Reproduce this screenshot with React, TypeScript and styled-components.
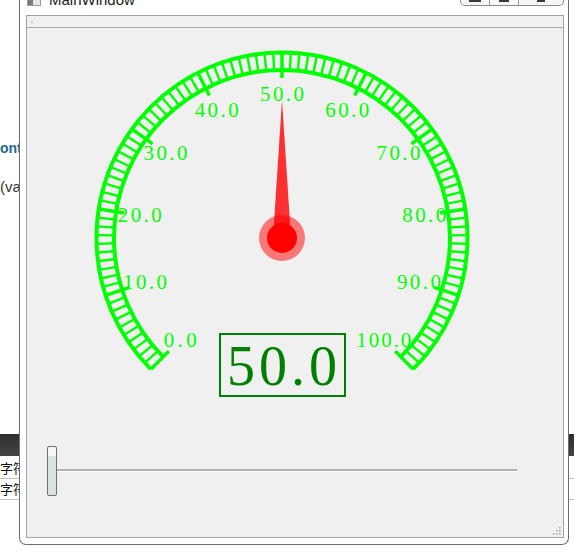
import React from 'react';
import styled, { createGlobalStyle } from 'styled-components';

const GlobalStyle = createGlobalStyle`
  html, body {
    margin: 0;
    padding: 0;
    background: #ffffff;
    overflow: hidden;
  }
`;

const Page = styled.div`
  display: grid;
  grid-template-columns: 19px 550px 5px;
  width: 574px;
  height: 559px;
  overflow: hidden;
  background: #ffffff;
  font-family: 'Liberation Sans', Arial, sans-serif;
`;

const Backdrop = styled.div`
  display: flex;
  flex-direction: column;
  overflow: hidden;
  white-space: nowrap;
`;

const LinkText = styled.div<{ top: number }>`
  margin-top: ${(p) => p.top}px;
  font-size: 14px;
  line-height: 16px;
  font-weight: bold;
  color: #1d6c8c;
`;

const CodeText = styled.div<{ top: number }>`
  margin-top: ${(p) => p.top}px;
  font-size: 15px;
  line-height: 16px;
  color: #333333;
  font-family: 'Liberation Sans', 'Noto Sans CJK SC', sans-serif;
`;

const DarkBar = styled.div<{ top: number }>`
  margin-top: ${(p) => p.top}px;
  height: 22px;
  background: linear-gradient(#2e2e2e, #444444);
`;

const TableRow = styled.div`
  height: 20px;
  border-bottom: 1px solid #c4c4c4;
  font-family: 'Noto Sans CJK SC', sans-serif;
  font-size: 13px;
  line-height: 20px;
  color: #111111;
`;

const Window = styled.div`
  display: flex;
  flex-direction: column;
  height: 545px;
  box-sizing: border-box;
  padding: 0 4px 6px 6px;
  border: 1px solid #6c6c6c;
  border-top: none;
  border-radius: 0 0 7px 7px;
  background: #ffffff;
`;

const TitleBar = styled.div`
  display: flex;
  height: 15px;
  flex: none;
  overflow: hidden;
`;

const AppIcon = styled.div`
  width: 14px;
  height: 14px;
  margin: -8px 0 0 1px;
  box-sizing: border-box;
  border: 1px solid #9a9a9a;
  background: linear-gradient(90deg, #7a7a7a 0 45%, #e8e8e8 45% 100%);
`;

const TitleText = styled.div`
  margin: -8px 0 0 8px;
  font-family: 'Liberation Sans', Arial, sans-serif;
  font-size: 15px;
  line-height: 15px;
  color: #1a1a1a;
`;

const CaptionButtons = styled.div`
  display: flex;
  margin-left: auto;
  height: 6px;
  box-sizing: border-box;
  border: 1px solid #8a8a8a;
  border-top: none;
  border-radius: 0 0 5px 5px;
  background: #f6f6f6;
  overflow: hidden;
`;

const CaptionButton = styled.div<{ w: number; last?: boolean }>`
  display: flex;
  justify-content: center;
  width: ${(p) => p.w}px;
  border-right: ${(p) => (p.last ? 'none' : '1px solid #9a9a9a')};
`;

const CaptionGlyph = styled.div<{ w: number }>`
  width: ${(p) => p.w}px;
  height: 2px;
  background: #3a3a3a;
`;

const Client = styled.div`
  display: flex;
  flex-direction: column;
  flex: 1;
  border: 1px solid #a3a3a3;
  background: #f0f0f0;
`;

const MenuStrip = styled.div`
  display: flex;
  align-items: center;
  height: 11px;
  flex: none;
  padding-left: 4px;
  border-bottom: 1px solid #a8a8a8;
  background: #f0f0f0;
`;

const Grip = styled.div`
  width: 2px;
  height: 2px;
  background: #c8c8c8;
`;

const Body = styled.div`
  display: flex;
  flex-direction: column;
  flex: 1;
`;

const SliderRow = styled.div`
  display: flex;
  align-items: center;
  height: 50px;
  margin-top: 38px;
  padding-left: 20px;
`;

const SliderHandle = styled.div`
  width: 10px;
  height: 50px;
  box-sizing: border-box;
  border: 1px solid #6f6f6f;
  border-radius: 2px;
  background: linear-gradient(#f6f6f6 0 18%, #dbe4da 18% 100%);
`;

const SliderGroove = styled.div`
  width: 460px;
  height: 2px;
  margin-top: -1px;
  background: #b2b2b2;
  border-bottom: 1px solid #ffffff;
`;

const SizeGrip = styled.svg`
  align-self: flex-end;
  margin: auto 2px 2px 0;
`;

const CX = 255;
const CY = 210;
const R_OUT = 185.5;
const R_IN = 168;
const R_MAJOR = 160;
const R_LABEL = 144;
const GREEN = '#00ff00';

const angleOf = (v: number) => 225 - v * 2.7;

const pt = (r: number, deg: number) => {
  const a = (deg * Math.PI) / 180;
  return [CX + r * Math.cos(a), CY - r * Math.sin(a)];
};

const arcPath = (r: number) => {
  const [x1, y1] = pt(r, 225);
  const [x2, y2] = pt(r, -45);
  return `M ${x1} ${y1} A ${r} ${r} 0 1 1 ${x2} ${y2}`;
};

interface GaugeProps {
  value: number;
}

const Gauge: React.FC<GaugeProps> = ({ value }) => {
  const ticks = [];
  for (let i = 0; i <= 100; i++) {
    const major = i % 10 === 0;
    const [x1, y1] = pt(R_OUT, angleOf(i));
    const [x2, y2] = pt(major ? R_MAJOR : R_IN, angleOf(i));
    ticks.push(
      <line key={i} x1={x1} y1={y1} x2={x2} y2={y2} stroke={GREEN} strokeWidth={major ? 3.5 : 2.4} />
    );
  }

  const labels = [];
  for (let i = 0; i <= 10; i++) {
    const text = `${i * 10}.0`;
    const [x, y] = pt(R_LABEL, angleOf(i * 10));
    labels.push(
      <text
        key={i}
        x={x}
        y={y + 7}
        textAnchor="middle"
        textLength={text.length * 11}
        lengthAdjust="spacing"
        fill={GREEN}
        fontFamily="'Liberation Serif', serif"
        fontSize={21}
      >
        {text}
      </text>
    );
  }

  const a = angleOf(value);
  const [tx, ty] = pt(138, a);
  const [lx, ly] = pt(9, a + 90);
  const [rx, ry] = pt(9, a - 90);

  return (
    <svg width={536} height={380} viewBox="0 0 536 380">
      <path d={arcPath(R_OUT)} fill="none" stroke={GREEN} strokeWidth={4} />
      <path d={arcPath(R_IN)} fill="none" stroke={GREEN} strokeWidth={4} />
      {ticks}
      {labels}
      <circle cx={CX} cy={CY} r={23} fill="rgba(255,0,0,0.5)" />
      <polygon points={`${tx},${ty} ${lx},${ly} ${rx},${ry}`} fill="rgba(255,0,0,0.8)" />
      <circle cx={CX} cy={CY} r={15} fill="#ff0000" />
      <rect x={193} y={306} width={125} height={62} fill="none" stroke="#008000" strokeWidth={2} />
      <text
        x={CX}
        y={357}
        textAnchor="middle"
        textLength={110}
        lengthAdjust="spacing"
        fill="#008000"
        fontFamily="'Liberation Serif', serif"
        fontSize={56}
      >
        {value.toFixed(1)}
      </text>
    </svg>
  );
};

const App: React.FC = () => {
  return (
    <>
      <GlobalStyle />
      <Page>
        <Backdrop>
          <LinkText top={140}>ont</LinkText>
          <CodeText top={23}>(va</CodeText>
          <DarkBar top={239} />
          <TableRow style={{ marginTop: 2 }}>字符</TableRow>
          <TableRow>字符</TableRow>
        </Backdrop>

        <Window>
          <TitleBar>
            <AppIcon />
            <TitleText>MainWindow</TitleText>
            <CaptionButtons>
              <CaptionButton w={28}>
                <CaptionGlyph w={12} />
              </CaptionButton>
              <CaptionButton w={28}>
                <CaptionGlyph w={10} />
              </CaptionButton>
              <CaptionButton w={44} last>
                <CaptionGlyph w={8} />
              </CaptionButton>
            </CaptionButtons>
          </TitleBar>
          <Client>
            <MenuStrip>
              <Grip />
            </MenuStrip>
            <Body>
              <Gauge value={50} />
              <SliderRow>
                <SliderHandle />
                <SliderGroove />
              </SliderRow>
              <SizeGrip width={10} height={10} viewBox="0 0 10 10">
                {[
                  [8, 2],
                  [8, 5],
                  [5, 5],
                  [8, 8],
                  [5, 8],
                  [2, 8],
                ].map(([x, y]) => (
                  <rect key={`${x}-${y}`} x={x} y={y} width={1.5} height={1.5} fill="#a0a0a0" />
                ))}
              </SizeGrip>
            </Body>
          </Client>
        </Window>

        <Backdrop>
          <DarkBar top={434} />
          <TableRow style={{ marginTop: 2 }} />
          <TableRow />
        </Backdrop>
      </Page>
    </>
  );
};

export default App;
